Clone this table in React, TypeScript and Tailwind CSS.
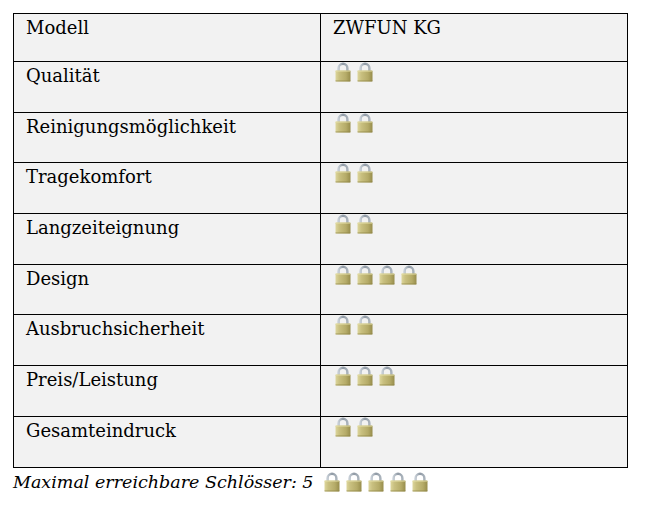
import React from "react";

const rows: [string, number][] = [
  ["Qualität", 2],
  ["Reinigungsmöglichkeit", 2],
  ["Tragekomfort", 2],
  ["Langzeiteignung", 2],
  ["Design", 4],
  ["Ausbruchsicherheit", 2],
  ["Preis/Leistung", 3],
  ["Gesamteindruck", 2],
];

const Lock = () => (
  <svg width="16" height="20" viewBox="0 0 16 20" className="block">
    <defs>
      <linearGradient id="lockBody" x1="0" y1="0" x2="1" y2="0">
        <stop offset="0" stopColor="#ddd69c" />
        <stop offset="0.25" stopColor="#c9c080" />
        <stop offset="0.7" stopColor="#b5ab68" />
        <stop offset="1" stopColor="#978d4c" />
      </linearGradient>
      <linearGradient id="lockShackle" x1="0" y1="0" x2="1" y2="0">
        <stop offset="0" stopColor="#c4ccd4" />
        <stop offset="0.5" stopColor="#8f99a4" />
        <stop offset="1" stopColor="#a9b2bb" />
      </linearGradient>
    </defs>
    <path d="M3.6 9 V6.2 A4.4 4.4 0 0 1 12.4 6.2 V9" fill="none" stroke="url(#lockShackle)" strokeWidth="2.4" />
    <rect x="0.5" y="8.5" width="15" height="11" rx="0.8" fill="url(#lockBody)" />
    <rect x="0.5" y="8.5" width="15" height="1.2" fill="#e6e0aa" opacity="0.7" />
    <rect x="0.5" y="18.4" width="15" height="1.1" fill="#8c8244" opacity="0.6" />
  </svg>
);

const Locks = ({ n }: { n: number }) => (
  <div className="flex flex-row gap-[6px]">
    {Array.from({ length: n }).map((_, i) => (
      <Lock key={i} />
    ))}
  </div>
);

export default function App() {
  return (
    <div className="w-[645px] h-[510px] bg-white pt-[13px] pl-[13px] text-black" style={{ fontFamily: '"DejaVu Serif", "Liberation Serif", serif' }}>
      <table className="border-collapse bg-[#f2f2f2] w-[615px] table-fixed">
        <tbody>
          <tr className="h-[48px]">
            <td className="w-[307px] border-[1.5px] border-black align-top pl-[12px] pt-[1px] text-[18px] leading-[26px]">Modell</td>
            <td className="border-[1.5px] border-black align-top pl-[12px] pt-[1px] text-[18px] leading-[26px]">ZWFUN KG</td>
          </tr>
          {rows.map(([label, n]) => (
            <tr key={label} className="h-[50.7px]">
              <td className="border-[1.5px] border-black align-top pl-[12px] pt-[1px] text-[18px] leading-[26px]">{label}</td>
              <td className="border-[1.5px] border-black align-top pl-[14px] pt-0">
                <Locks n={n} />
              </td>
            </tr>
          ))}
        </tbody>
      </table>
      <div className="flex flex-row items-center gap-[10px] mt-[1px]">
        <span className="italic text-[17.5px] leading-[26px]">Maximal erreichbare Schlösser: 5</span>
        <Locks n={5} />
      </div>
    </div>
  );
}
